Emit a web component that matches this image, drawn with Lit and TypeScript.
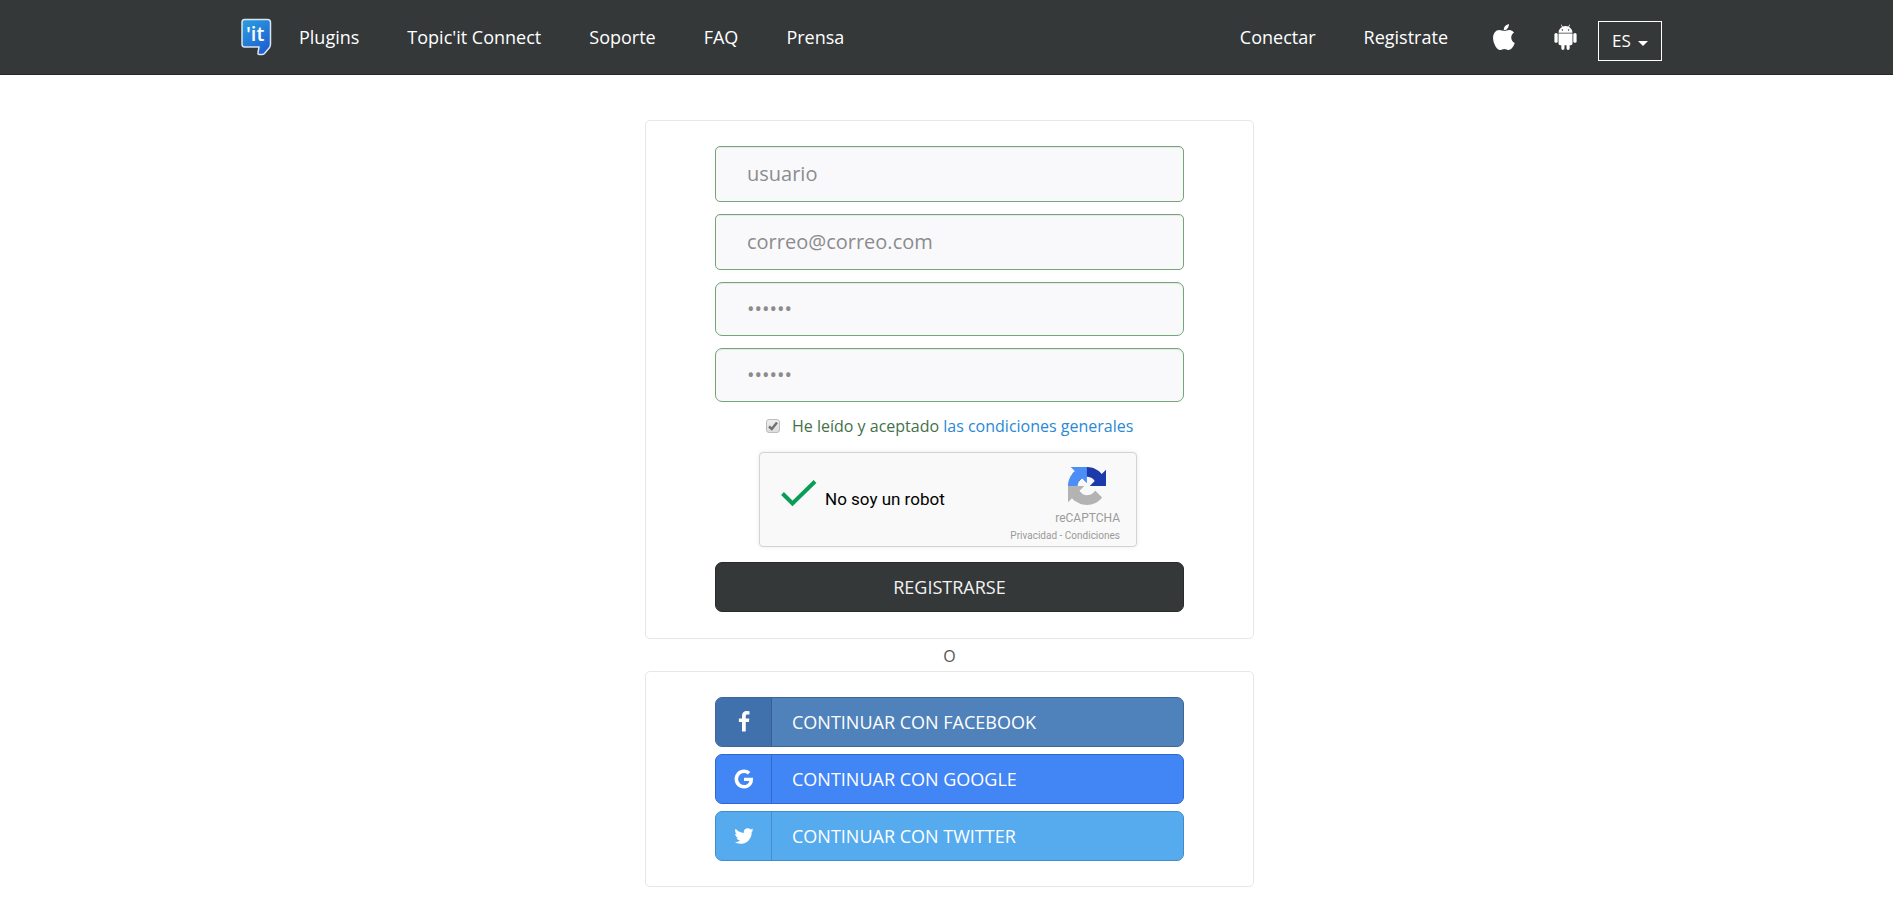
import { LitElement, html, css, svg } from "lit";
import { customElement } from "lit/decorators.js";

const icons = {
  facebook: svg`<path d="M1343 12v264h-157q-86 0-116 36t-30 108v189h293l-39 296h-254v759h-306v-759h-255v-296h255v-218q0-186 104-288.500t277-102.500q147 0 228 12z"/>`,
  google: svg`<path d="M896 786h725q12 67 12 128 0 217-91 387.500t-259.500 266.500-386.500 96q-157 0-299-60.500t-245-163.500-163.500-245-60.500-299 60.500-299 163.500-245 245-163.500 299-60.500q300 0 515 201l-209 201q-123-119-306-119-129 0-238.500 65t-173.500 176.500-64 243.500 64 243.500 173.500 176.500 238.500 65q87 0 160-24t120-60 82-82 51.500-87 22.500-78h-436v-264z"/>`,
  twitter: svg`<path d="M1684 408q-67 98-162 167 1 14 1 42 0 130-38 259.500t-115.500 248.500-184.500 210.500-258 146-323 54.500q-271 0-496-145 35 4 78 4 225 0 401-138-105-2-188-64.500t-114-159.500q33 5 61 5 43 0 85-11-112-23-185.500-111.500t-73.500-205.500v-4q68 38 146 41-66-44-105-115t-39-154q0-88 44-163 121 149 294.500 238.500t371.500 99.500q-8-38-8-74 0-134 94.500-228.500t228.500-94.500q140 0 236 102 109-21 205-78-37 115-142 178 93-10 186-50z"/>`,
};

const providers = [
  { id: "facebook", label: "CONTINUAR CON FACEBOOK", icon: icons.facebook },
  { id: "google", label: "CONTINUAR CON GOOGLE", icon: icons.google },
  { id: "twitter", label: "CONTINUAR CON TWITTER", icon: icons.twitter },
];

@customElement("site-nav")
class SiteNav extends LitElement {
  static styles = css`
    :host { display: block; }
    .bar {
      display: flex; align-items: center; box-sizing: border-box; min-height: 75px;
      padding: 0 231px 0 241px; background: #353839; border-bottom: 1px solid #2a2329;
      font: 18px/24px "Open Sans", sans-serif; color: #fff;
    }
    .brand { display: flex; margin-right: 27px; }
    .links { display: flex; gap: 48px; }
    .right { margin-left: auto; display: flex; align-items: center; }
    a { color: #fff; text-decoration: none; white-space: nowrap; }
    .icon { display: flex; }
    .apple { margin-left: 45px; }
    .android { margin: 0 21px 0 39px; }
    .lang { position: relative; display: flex; margin-top: 8px; }
    select {
      appearance: none; box-sizing: border-box; width: 64px; height: 40px; padding: 0 0 0 13px; margin: 0;
      border: 1px solid #fff; border-radius: 0; background: transparent; color: #fff;
      font: 17px/24px "Open Sans", sans-serif;
    }
    option { color: #333; }
    .caret { position: absolute; right: 14px; top: 20px; pointer-events: none; }
  `;
  render() {
    return html`
      <nav class="bar">
        <a class="brand" href="#" aria-label="Topic'it">
          <svg width="31" height="38" viewBox="0 0 31 38">
            <defs><linearGradient id="g" x1="0" y1="0" x2="0.6" y2="1">
              <stop offset="0" stop-color="#2aa0e0"/><stop offset="1" stop-color="#1f62d2"/>
            </linearGradient></defs>
            <path d="M3.500 1.500H26.500Q29.500 1.500 29.500 4.500V26Q29.500 28 28.500 29.500L23.500 35.500Q22.500 36.500 21 36.500H18.500Q16.500 36.500 17 34.500L18 29H3.500Q1 29 1 26V4.500Q1 1.500 3.500 1.500Z"
              fill="url(#g)" stroke="#d9e4ee" stroke-width="1.500"/>
            <text x="5" y="23" font-family="Open Sans, sans-serif" font-weight="600" font-size="20" fill="#fff">'it</text>
          </svg>
        </a>
        <div class="links">
          <a href="#">Plugins</a><a href="#">Topic'it Connect</a><a href="#">Soporte</a><a href="#">FAQ</a><a href="#">Prensa</a>
        </div>
        <div class="right">
          <div class="links"><a href="#">Conectar</a><a href="#">Registrate</a></div>
          <a class="icon apple" href="#" aria-label="App Store">
            <svg width="22" height="26" viewBox="192 0 1408 1664" fill="#fff"><path d="M1585 1215q-39 125-123 250-129 196-257 196-49 0-140-32-86-32-151-32-61 0-142 33-81 34-132 34-152 0-301-259-147-261-147-503 0-228 113-374 113-144 284-144 72 0 177 30 104 30 138 30 45 0 143-34 102-34 173-34 119 0 213 65 52 36 104 100-79 67-114 118-65 94-65 207 0 124 69 223t158 126zm-376-1173q0 61-29 136-30 75-93 138-54 54-108 72-37 11-104 17 3-149 78-257 74-107 250-148 1 3 2.500 11t2.500 11q0 4 .5 10t.5 10z"/></svg>
          </a>
          <a class="icon android" href="#" aria-label="Google Play">
            <svg width="23" height="26" viewBox="0 0 23 26" fill="#fff">
              <path fill-rule="evenodd" d="M4.500 8.700C4.500 5.800 6.200 3.800 8 2.900L6.900 .8L7.400 .5L8.600 2.600Q11.500 1.600 14.400 2.600L15.600 .5L16.100 .8L15 2.900C16.800 3.800 18.500 5.800 18.500 8.700ZM8.400 5.300a.7.7 0 1 0 .01 0ZM14.600 5.300a.7.7 0 1 0 .01 0Z"/>
              <path d="M4.500 9.500H18.500V19.500Q18.500 21.200 16.800 21.200H15.700V24.300Q15.700 25.900 14.100 25.900T12.500 24.300V21.200H10.500V24.300Q10.500 25.900 8.900 25.900T7.300 24.300V21.200H6.200Q4.500 21.200 4.500 19.500Z"/>
              <rect x=".4" y="9" width="3.300" height="9.800" rx="1.600"/><rect x="19.300" y="9" width="3.300" height="9.800" rx="1.600"/>
            </svg>
          </a>
          <div class="lang">
            <select aria-label="Idioma"><option>ES</option><option>EN</option></select>
            <svg class="caret" width="10" height="5" viewBox="0 0 10 5" fill="#fff"><path d="M0 0H10L5 5Z"/></svg>
          </div>
        </div>
      </nav>`;
  }
}

@customElement("captcha-box")
class CaptchaBox extends LitElement {
  static styles = css`
    :host { display: block; }
    .box {
      display: flex; box-sizing: border-box; width: 378px; height: 95px; padding: 14px 16px 0 21px;
      background: #f9f9f9; border: 1px solid #d3d3d3; border-radius: 4px;
      box-shadow: 0 0 5px rgba(0, 0, 0, 0.08); font-family: Roboto, sans-serif;
    }
    .check { margin-top: 12px; }
    .text { margin: 20px 0 0 8px; font-size: 17px; line-height: 24px; color: #000; }
    .side { margin-left: auto; display: flex; flex-direction: column; align-items: flex-end; color: #999; }
    .logo { margin-right: 14px; }
    .name { margin-top: 5px; font-size: 12px; line-height: 16px; color: #9b9b9b; }
    .legal { margin-top: 2px; font-size: 10px; line-height: 16px; }
    a { color: inherit; text-decoration: none; }
  `;
  render() {
    return html`
      <div class="box">
        <svg class="check" width="36" height="28" viewBox="0 0 36 28"><path d="M1.500 14.500L11.500 24.500L34 2.500" fill="none" stroke="#0a9d58" stroke-width="4"/></svg>
        <span class="text">No soy un robot</span>
        <div class="side">
          <svg class="logo" width="38" height="38" viewBox="0 0 64 64">
            <path fill="#1c3aa9" d="M64 31.955l-.033-1.370V4.687l-7.160 7.160C50.948 4.674 42.033.093 32.050.093c-10.400 0-19.622 4.960-25.458 12.640l11.736 11.860a15.550 15.550 0 0 1 4.754-5.334c2.050-1.600 4.952-2.906 8.968-2.906.485 0 .86.057 1.135.163 4.976.393 9.288 3.140 11.828 7.124l-8.307 8.307L64 31.953"/>
            <path fill="#4b8ef7" d="M31.862.094l-1.370.033H4.594l7.160 7.160C4.580 13.147 0 22.060 0 32.046c0 10.400 4.960 19.622 12.640 25.458L24.500 45.768a15.560 15.560 0 0 1-5.334-4.754c-1.600-2.050-2.906-4.952-2.906-8.968 0-.485.057-.86.163-1.135.393-4.976 3.140-9.288 7.124-11.828l8.307 8.307L31.860.095"/>
            <path fill="#b3b3b3" d="M.001 32.045l.033 1.370v25.898l7.160-7.160c5.860 7.173 14.774 11.754 24.760 11.754 10.400 0 19.622-4.960 25.458-12.640l-11.736-11.860a15.550 15.550 0 0 1-4.754 5.334c-2.050 1.600-4.952 2.906-8.968 2.906-.485 0-.86-.057-1.135-.163-4.976-.393-9.288-3.140-11.828-7.124l8.307-8.307c-10.522.04-22.400.066-27.295-.005"/>
          </svg>
          <span class="name">reCAPTCHA</span>
          <span class="legal"><a href="#">Privacidad</a> - <a href="#">Condiciones</a></span>
        </div>
      </div>`;
  }
}

@customElement("app-root")
class AppRoot extends LitElement {
  static styles = css`
    :host { display: block; min-height: 100vh; background: #fff; font: 16px/24px "Open Sans", sans-serif; color: #555; }
    .main { display: flex; flex-direction: column; align-items: center; padding: 45px 0 31px 6px; }
    .card {
      box-sizing: border-box; width: 100%; max-width: 609px; padding: 25px 69px 26px;
      border: 1px solid #e7e7e7; border-radius: 5px;
    }
    .form { display: flex; flex-direction: column; gap: 12px; }
    .field {
      box-sizing: border-box; width: 100%; height: 56px; padding: 0 31px 2px; margin: 0;
      border: 1px solid #74a477; border-radius: 5px; background: #f9f9fc; outline: none;
      box-shadow: inset 0 1px 1px rgba(0, 0, 0, 0.075);
      font: 20px/28px "Open Sans", sans-serif; color: #8c8c8c;
    }
    .field::placeholder { color: #8c8c8c; opacity: 1; }
    .secret { height: 54px; border-radius: 7px; }
    .terms { display: flex; align-items: center; padding-left: 51px; color: #44704a; white-space: nowrap; }
    .tick { position: relative; display: flex; margin-right: 12px; }
    .tick input {
      appearance: none; box-sizing: border-box; width: 14px; height: 14px; margin: 0;
      border: 1px solid #bdbdbd; border-radius: 3px; background: linear-gradient(#eee, #dcdcdc);
    }
    .tick svg { position: absolute; left: 2px; top: 2px; pointer-events: none; display: none; }
    .tick input:checked + svg { display: block; }
    .terms a { color: #2a88d4; text-decoration: none; }
    .captcha { margin: 2px 0 3px 44px; }
    .submit {
      height: 50px; padding: 0; border: 1px solid #2a2a2c; border-radius: 7px; background: #353839;
      font: 18px/24px "Open Sans", sans-serif; color: #f2f2f2;
    }
    .or { padding: 5px 0 3px; }
    .social { display: flex; flex-direction: column; gap: 7px; padding-bottom: 25px; }
    .provider {
      display: flex; align-items: stretch; height: 50px; padding: 0; overflow: hidden;
      border: 1px solid; border-radius: 7px; font: 18px/24px "Open Sans", sans-serif; color: #fff;
    }
    .glyph {
      display: flex; align-items: center; justify-content: center; box-sizing: border-box; width: 56px;
      border-right: 1px solid;
    }
    .label { align-self: center; margin-left: 20px; }
    .facebook { background: #4f82bb; border-color: #3c6797; }
    .facebook .glyph { background: #4171ad; border-color: #365f93; }
    .google { background: #4285f5; border-color: #3168cd; }
    .google .glyph { border-color: #316acf; }
    .twitter { background: #55abee; border-color: #418cc9; }
    .twitter .glyph { border-color: #438fcb; }
  `;
  render() {
    return html`
      <site-nav></site-nav>
      <main class="main">
        <form class="card form" @submit=${(e: Event) => e.preventDefault()}>
          <input class="field" type="text" aria-label="Usuario" placeholder="usuario" />
          <input class="field" type="email" aria-label="Correo" placeholder="correo@correo.com" />
          <input class="field secret" type="password" aria-label="Contraseña" placeholder="••••••" />
          <input class="field secret" type="password" aria-label="Repetir contraseña" placeholder="••••••" />
          <div class="terms">
            <span class="tick">
              <input id="terms" type="checkbox" checked />
              <svg width="10" height="10" viewBox="0 0 10 10"><path d="M1 5.500L3.800 8L9 1.500" fill="none" stroke="#707070" stroke-width="2.400"/></svg>
            </span>
            <label for="terms">He leído y aceptado <a href="#">las condiciones generales</a></label>
          </div>
          <captcha-box class="captcha"></captcha-box>
          <button class="submit" type="submit">REGISTRARSE</button>
        </form>
        <div class="or">O</div>
        <section class="card social">
          ${providers.map(
            (p) => html`<button class="provider ${p.id}" type="button">
              <span class="glyph"><svg width="22" height="22" viewBox="0 0 1792 1792" fill="#fff">${p.icon}</svg></span>
              <span class="label">${p.label}</span>
            </button>`
          )}
        </section>
      </main>`;
  }
}
